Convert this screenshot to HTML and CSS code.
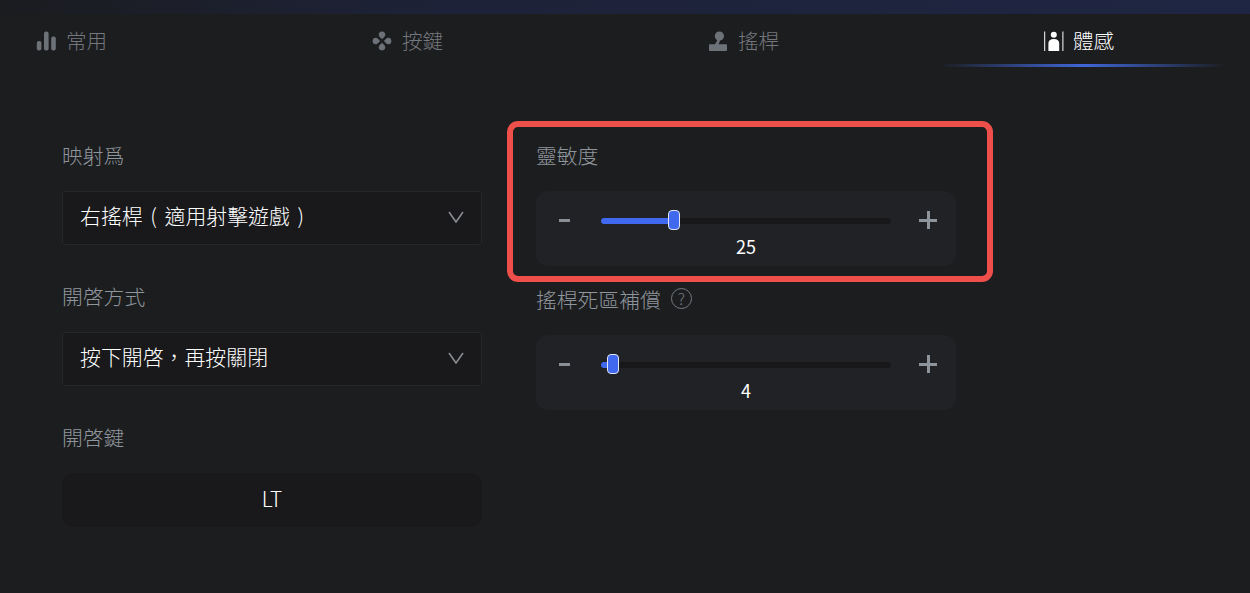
FILE: index.html
```html
<!DOCTYPE html>
<html lang="zh-Hant">
<head>
    <meta charset="UTF-8">
    <meta name="viewport" content="width=device-width, initial-scale=1.0">
    <title>體感</title>
    <link rel="stylesheet" href="styles.css">
</head>
<body>
    <div class="top-strip"></div>

    <div class="tabs">
        <div class="tab">
            <svg class="tab-icon" viewBox="0 0 20 20">
                <rect x="0.8" y="10" width="4.6" height="9.5" rx="2"/>
                <rect x="8" y="0.6" width="4.6" height="18.9" rx="2"/>
                <rect x="15.2" y="5.6" width="4.6" height="13.9" rx="2"/>
            </svg>
            <span>常用</span>
        </div>
        <div class="tab">
            <svg class="tab-icon" viewBox="0 0 20 20">
                <path d="M10 0.6 C12.4 0.6 13.6 2.4 13.2 4.2 C12.9 5.6 11.4 7 10 8 C8.6 7 7.1 5.6 6.8 4.2 C6.4 2.4 7.6 0.6 10 0.6 Z"/>
                <path d="M10 19.4 C12.4 19.4 13.6 17.6 13.2 15.8 C12.9 14.4 11.4 13 10 12 C8.6 13 7.1 14.4 6.8 15.8 C6.4 17.6 7.6 19.4 10 19.4 Z"/>
                <path d="M0.6 10 C0.6 7.6 2.4 6.4 4.2 6.8 C5.6 7.1 7 8.6 8 10 C7 11.4 5.6 12.9 4.2 13.2 C2.4 13.6 0.6 12.4 0.6 10 Z"/>
                <path d="M19.4 10 C19.4 7.6 17.6 6.4 15.8 6.8 C14.4 7.1 13 8.6 12 10 C13 11.4 14.4 12.9 15.8 13.2 C17.6 13.6 19.4 12.4 19.4 10 Z"/>
            </svg>
            <span>按鍵</span>
        </div>
        <div class="tab">
            <svg class="tab-icon" viewBox="0 0 20 20">
                <circle cx="11.4" cy="5" r="4.6"/>
                <path d="M10 8 L6.6 14 L10.4 14 L12.6 8 Z"/>
                <path d="M1.6 13.2 H18.4 Q19 13.2 19 14 V19 Q19 20 18 20 H2 Q1 20 1 19 V14 Q1 13.2 1.6 13.2 Z"/>
            </svg>
            <span>搖桿</span>
        </div>
        <div class="tab tab-active">
            <svg class="tab-icon" viewBox="0 0 20 20">
                <rect x="0.2" y="0.5" width="1" height="19.5"/>
                <rect x="18.4" y="0.5" width="1" height="19.5"/>
                <circle cx="9.8" cy="3.8" r="3"/>
                <path d="M4.4 20 V12.5 Q4.4 8 9.8 8 Q15.2 8 15.2 12.5 V20 Z"/>
            </svg>
            <span>體感</span>
            <div class="tab-line"></div>
        </div>
    </div>

    <div class="content">
        <div class="column">
            <div class="field-label">映射爲</div>
            <div class="select">
                <span class="select-text">右搖桿 ( 適用射擊遊戲 )</span>
                <svg class="chevron" viewBox="0 0 16 12"><path d="M1 1 L8 11 L15 1"/></svg>
            </div>

            <div class="field-label">開啓方式</div>
            <div class="select">
                <span class="select-text">按下開啓，再按關閉</span>
                <svg class="chevron" viewBox="0 0 16 12"><path d="M1 1 L8 11 L15 1"/></svg>
            </div>

            <div class="field-label">開啓鍵</div>
            <div class="key-button">LT</div>
        </div>

        <div class="column">
            <div class="field-label">靈敏度</div>
            <div class="slider-box">
                <div class="slider-row">
                    <div class="minus"></div>
                    <div class="track">
                        <div class="track-fill" style="width: 73px"></div>
                        <div class="thumb" style="left: 67px"></div>
                    </div>
                    <div class="plus"></div>
                </div>
                <div class="slider-value">25</div>
            </div>

            <div class="field-label field-label-help">
                搖桿死區補償
                <span class="help">?</span>
            </div>
            <div class="slider-box">
                <div class="slider-row">
                    <div class="minus"></div>
                    <div class="track">
                        <div class="track-fill" style="width: 12px"></div>
                        <div class="thumb" style="left: 6px"></div>
                    </div>
                    <div class="plus"></div>
                </div>
                <div class="slider-value">4</div>
            </div>
        </div>
    </div>

    <div class="highlight"></div>
</body>
</html>
```

FILE: styles.css
```css
html, body {
    height: 100%;
}
body {
    font-family: "Noto Sans CJK TC", "Noto Sans", sans-serif;
    font-weight: 300;
    background-color: #1c1d1f;
    color: #fff;
    margin: 0;
    padding: 0;
    overflow: hidden;
    position: relative;
}
.top-strip {
    height: 14px;
    background: linear-gradient(90deg, #1b1c20 0%, #1d2238 35%, #1f2643 100%);
}
.tabs {
    display: flex;
    height: 52px;
    padding-left: 36px;
}
.tab {
    position: relative;
    display: flex;
    align-items: center;
    flex: 0 0 336px;
    height: 53px;
    color: #74777d;
    font-size: 20.6px;
    line-height: 1;
}
.tab-icon {
    width: 20px;
    height: 20px;
    fill: #6d7279;
    margin-right: 10px;
    margin-top: 1px;
}
.tab-active {
    flex: 1;
    color: #fff;
}
.tab-active .tab-icon {
    fill: #fff;
    margin-right: 9px;
}
.tab-line {
    position: absolute;
    left: -104px;
    bottom: 0;
    width: 286px;
    height: 3px;
    background: linear-gradient(90deg, rgba(65, 105, 225, 0) 0%, #3f66d8 50%, rgba(65, 105, 225, 0) 100%);
}
.content {
    display: flex;
    gap: 54px;
    padding: 0 0 0 62px;
}
.column {
    width: 420px;
    padding-top: 72px;
}
.field-label {
    height: 36px;
    line-height: 34px;
    margin-bottom: 17px;
    font-size: 20.8px;
    color: #8f959c;
}
.field-label-help {
    display: flex;
    align-items: center;
    gap: 10px;
    box-sizing: border-box;
    padding-bottom: 3px;
    margin-top: 16px;
}
.select {
    display: flex;
    align-items: center;
    justify-content: space-between;
    box-sizing: border-box;
    height: 54px;
    padding: 0 17px 2px;
    margin-bottom: 34px;
    background: #19191b;
    border: 1px solid #26272b;
    border-radius: 3px;
    font-size: 20.9px;
}
.select-text {
    margin-bottom: 5px;
    word-spacing: 3px;
}
.chevron {
    width: 16px;
    height: 12px;
    fill: none;
    stroke: #8b9097;
    stroke-width: 1.5;
}
.key-button {
    height: 54px;
    line-height: 50px;
    text-align: center;
    background: #19191b;
    border-radius: 12px;
    font-size: 20.9px;
}
.slider-box {
    height: 75px;
    box-sizing: border-box;
    padding-top: 19px;
    background: #212226;
    border-radius: 12px;
}
.slider-row {
    position: relative;
    display: flex;
    align-items: center;
    height: 20px;
}
.minus {
    width: 11px;
    height: 3px;
    margin-left: 23px;
    background: #8b9097;
}
.plus {
    width: 18px;
    height: 18px;
    margin-left: 28px;
    background:
        linear-gradient(#8d949c, #8d949c) center / 18px 3px no-repeat,
        linear-gradient(#8d949c, #8d949c) center / 3px 18px no-repeat;
}
.track {
    position: relative;
    width: 290px;
    height: 6px;
    margin-left: 31px;
    margin-top: 2px;
    background: #18181a;
    border-radius: 3px;
}
.track-fill {
    height: 6px;
    background: #4169f0;
    border-radius: 3px;
}
.thumb {
    position: absolute;
    top: -8px;
    box-sizing: border-box;
    width: 12px;
    height: 20px;
    background: #4169f0;
    border: 1px solid #dfe5f5;
    border-radius: 4px;
}
.slider-value {
    margin-top: 3px;
    height: 26px;
    line-height: 26px;
    text-align: center;
    font-size: 18px;
    font-weight: 400;
}
.help {
    display: inline-block;
    box-sizing: border-box;
    width: 21px;
    height: 21px;
    line-height: 18px;
    text-align: center;
    font-size: 16px;
    color: #767a80;
    border: 1.5px solid #767a80;
    border-radius: 50%;
}
.highlight {
    position: absolute;
    left: 507px;
    top: 121px;
    box-sizing: border-box;
    width: 486px;
    height: 161px;
    border: 6px solid #ef4f4b;
    border-radius: 11px;
}
```
